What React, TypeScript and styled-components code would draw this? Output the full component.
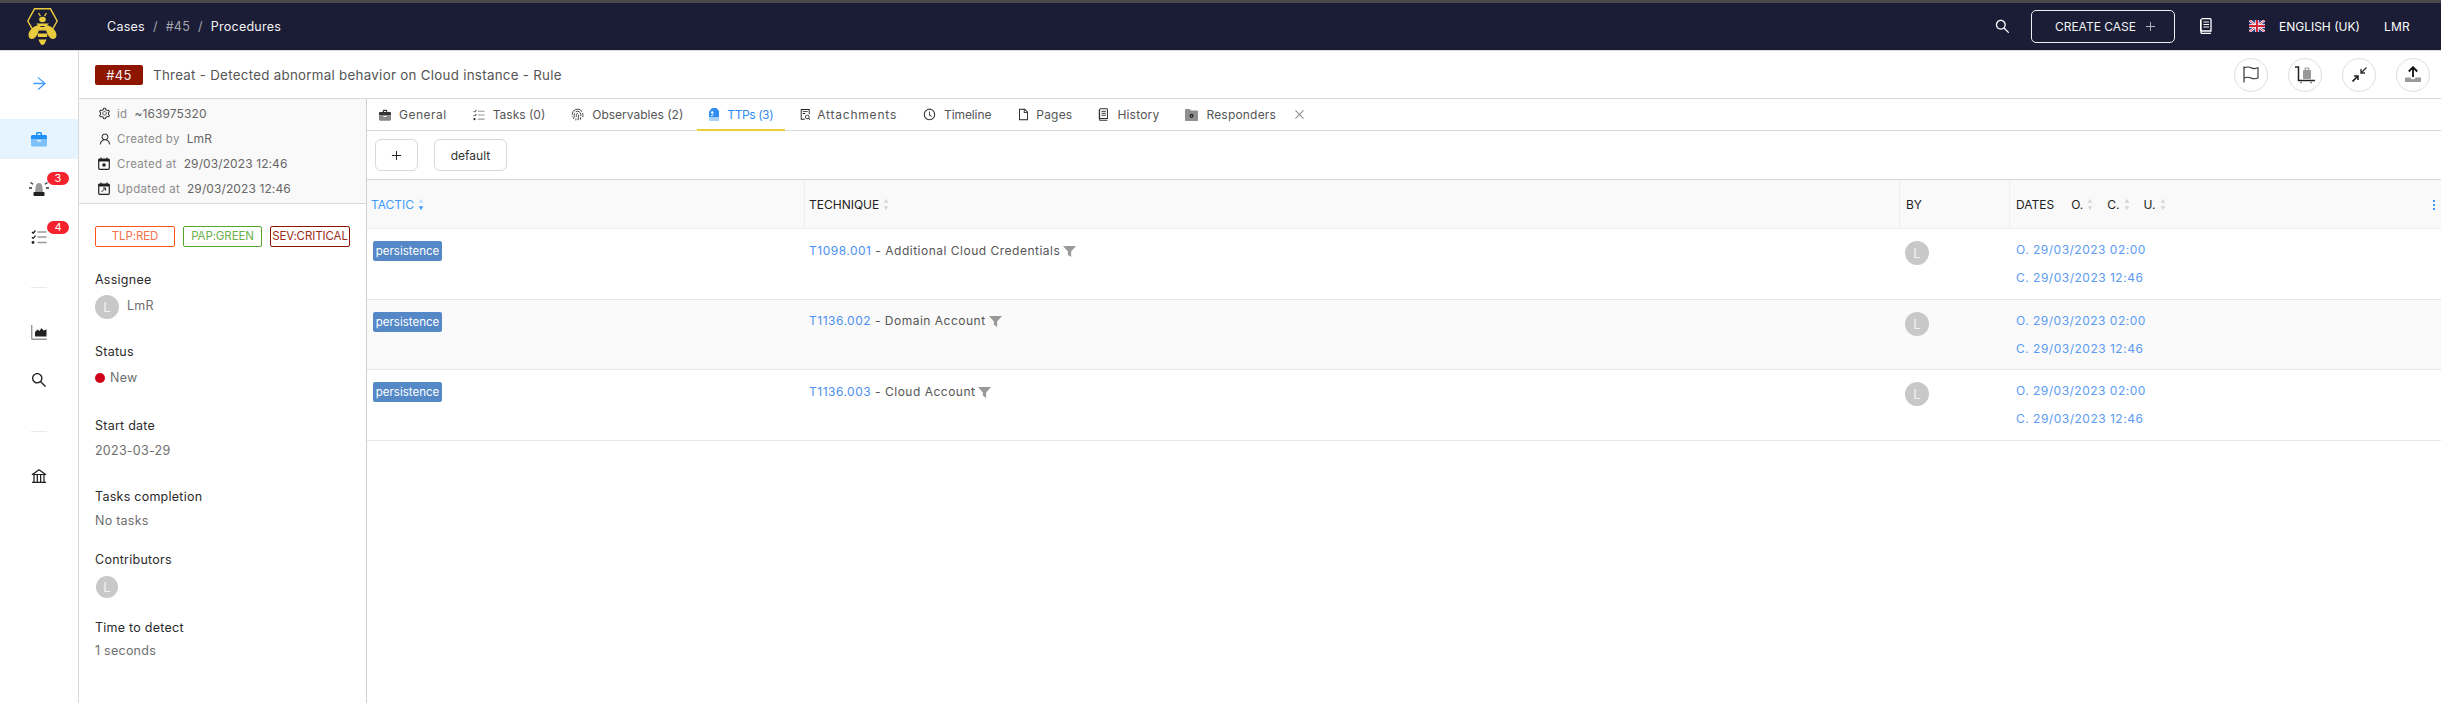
import React from 'react';
import styled, { createGlobalStyle } from 'styled-components';
import { AiOutlineArrowRight, AiOutlineSearch, AiOutlinePlus, AiOutlineClose, AiOutlineClockCircle, AiOutlineFile, AiOutlineSetting, AiOutlineBank, AiOutlineUser, AiOutlineFileSearch } from 'react-icons/ai';
import { Fingerprint } from 'lucide-react';

const Global = createGlobalStyle`
  html, body { margin: 0; padding: 0; height: 100%; overflow: hidden; background: #fff; }
  #root { height: 100%; }
  * { box-sizing: border-box; }
  body { font-family: Inter, "Open Sans", "Liberation Sans", sans-serif; font-size: 12px; letter-spacing: .25px; color: #333; }
`;

const Page = styled.div`height: 703px; display: flex; flex-direction: column;`;
const TopBar = styled.header`
  height: 51px; flex: none; background: #1b1d36; border-top: 3px solid #4b4b4b; border-bottom: 1px solid #ddd;
  display: flex; align-items: center; color: #fff; padding-left: 27px; padding-bottom: 1px;
`;
const LogoWrap = styled.div`width: 31px; height: 37px; margin-right: 49px;`;
const Crumbs = styled.nav`display: flex; gap: 8px; align-items: center; font-size: 12.5px; color: #f0f0f0;`;
const Crumb = styled.span<{ $muted?: boolean }>`color: ${p => (p.$muted ? '#a6a6ad' : '#f3f3f3')};`;
const TopRight = styled.div`margin-left: auto; display: flex; align-items: center; color: #fff;`;
const TopIcon = styled.span<{ $mr: number }>`display: flex; margin-right: ${p => p.$mr}px; font-size: 17px;`;
const CreateButton = styled.button`
  width: 144px; height: 33px; margin-right: 24px; background: transparent; border: 1px solid #f0f0f0; border-radius: 5px;
  color: #f2f2f2; font: inherit; font-size: 12px; letter-spacing: 0; display: flex; align-items: center; justify-content: center; gap: 8px; padding: 0 0 0 6px;
  svg { color: #b5b5bd; font-size: 13px; }
`;
const LangText = styled.span`margin-left: 14px; margin-right: 24px; font-size: 12px; letter-spacing: 0;`;
const UserName = styled.span`font-size: 12px; margin-right: 31px;`;

const Body = styled.div`flex: 1; display: flex; min-height: 0;`;
const Nav = styled.aside`width: 79px; flex: none; border-right: 1px solid #d9d9d9; display: flex; flex-direction: column;`;
const NavItem = styled.div<{ $active?: boolean; $h?: number; $mb?: number }>`
  position: relative; height: ${p => p.$h ?? 40}px; margin-bottom: ${p => p.$mb ?? 9}px; display: flex; align-items: center; justify-content: center;
  background: ${p => (p.$active ? '#e6f4ff' : 'transparent')}; font-size: 18px; color: #222;
`;
const Badge = styled.span`
  position: absolute; left: 47px; top: 4px; width: 22px; height: 13px; border-radius: 7px; background: #f5222d; color: #fff;
  font-size: 11px; line-height: 13px; text-align: center; letter-spacing: 0;
`;
const NavDivider = styled.div<{ $top: number }>`width: 16px; height: 1px; background: #e9e9e9; margin: ${p => p.$top}px auto 24px;`;

const Main = styled.main`flex: 1; min-width: 0; display: flex; flex-direction: column;`;
const CaseBar = styled.div`height: 48px; flex: none; border-bottom: 1px solid #d9d9d9; display: flex; align-items: center; padding-left: 16px; padding-right: 11px;`;
const CaseId = styled.span`width: 48px; height: 20px; background: #8e1600; border-radius: 2px; color: #f2f2f2; font-size: 13px; line-height: 20px; text-align: center; margin-right: 10px;`;
const CaseTitle = styled.span`font-size: 13.3px; color: #555; letter-spacing: .3px;`;
const Actions = styled.div`margin-left: auto; display: flex; gap: 20px;`;
const RoundBtn = styled.button`width: 34px; height: 34px; border-radius: 50%; border: 1px solid #dedede; background: #fff; padding: 0; display: flex; align-items: center; justify-content: center; color: #222; font-size: 17px;`;

const Content = styled.div`flex: 1; display: flex; min-height: 0;`;
const Side = styled.section`width: 288px; flex: none; border-right: 1px solid #d0d0d0; display: flex; flex-direction: column;`;
const Meta = styled.div`height: 105px; background: #f9f9f9; border-bottom: 1px solid #d9d9d9; padding: 2px 0 0 19px;`;
const MetaRow = styled.div`height: 25px; display: flex; align-items: center; color: #333; font-size: 12px; letter-spacing: .3px;`;
const MetaIcon = styled.span`width: 19px; display: flex; font-size: 14px; color: #333;`;
const MetaLabel = styled.span`color: #8c8c8c; margin-right: 7px; font-size: 11.5px;`;
const MetaValue = styled.span`color: #666; letter-spacing: .1px;`;
const Tags = styled.div`display: flex; gap: 8px; margin: 22px 0 0 16px;`;
const Tag = styled.span<{ $c: string; $t: string; $w: number }>`
  width: ${p => p.$w}px; height: 21px; border: 1px solid ${p => p.$c}; color: ${p => p.$t}; border-radius: 2px; font-size: 11.5px; line-height: 19px; text-align: center; letter-spacing: -.1px;
`;
const Block = styled.div<{ $top: number }>`margin: ${p => p.$top}px 0 0 16px;`;
const BlockLabel = styled.div<{ $gap: number }>`height: 20px; line-height: 20px; font-size: 12.5px; color: #2b2b2b; margin-bottom: ${p => p.$gap}px; padding-top: 1px;`;
const BlockValue = styled.div`height: 20px; line-height: 20px; color: #6e6e6e; font-size: 12.5px; display: flex; align-items: center; gap: 5px;`;
const Dot = styled.span`width: 10px; height: 10px; border-radius: 50%; background: #d0021b;`;
const Avatar = styled.span<{ $size?: number }>`
  width: ${p => p.$size ?? 24}px; height: ${p => p.$size ?? 24}px; border-radius: 50%; background: #c8c8c8; color: #f2f2f2; font-size: 13px;
  display: flex; align-items: center; justify-content: center; flex: none;
`;
const AssigneeRow = styled.div`display: flex; gap: 8px; align-items: flex-start; color: #6e6e6e; font-size: 12.5px; line-height: 22px;`;
const ContributorRow = styled.div`display: flex; padding-left: 1px;`;

const Work = styled.section`flex: 1; min-width: 0; display: flex; flex-direction: column;`;
const Tabs = styled.div`height: 32px; flex: none; border-bottom: 1px solid #d9d9d9; display: flex; align-items: stretch; gap: 2px;`;
const TabItem = styled.div<{ $active?: boolean; $ls?: number; $gap?: number }>`
  display: flex; align-items: center; gap: ${p => p.$gap ?? 8}px; padding: 0 12px; position: relative; font-size: 12px; letter-spacing: ${p => p.$ls ?? 0.2}px;
  color: ${p => (p.$active ? '#2f8cf0' : '#555')};
  svg { flex: none; }
  &::after { content: ''; position: absolute; left: 0; right: 0; bottom: -1px; height: 2px; background: ${p => (p.$active ? '#e8cf3a' : 'transparent')}; }
`;
const TabClose = styled.span`display: flex; align-items: center; margin-left: 3px; color: #8c8c8c; font-size: 13px;`;
const Toolbar = styled.div`height: 48px; flex: none; display: flex; align-items: center; padding-left: 8px; gap: 16px;`;
const GhostBtn = styled.button<{ $w: number }>`
  width: ${p => p.$w}px; height: 32px; border: 1px solid #d9d9d9; border-radius: 6px; background: #fff; color: #333; font: inherit; font-size: 12px;
  display: flex; align-items: center; justify-content: center; padding: 0;
`;
const TableGrid = `display: grid; grid-template-columns: 438px 1095px 110px 1fr;`;
const THead = styled.div`${TableGrid} height: 50px; flex: none; background: #f9f9f9; border-top: 1px solid #d9d9d9; border-bottom: 1px solid #efefef;`;
const TH = styled.div<{ $blue?: boolean; $pl?: number; $line?: boolean }>`
  display: flex; align-items: center; padding-left: ${p => p.$pl ?? 6}px; font-size: 12px; letter-spacing: 0; color: ${p => (p.$blue ? '#3f9bff' : '#222')};
  border-right: ${p => (p.$line ? '1px solid #efefef' : 'none')}; position: relative;
`;
const SortWrap = styled.span<{ $ml?: number; $mr?: number }>`display: inline-flex; margin-left: ${p => p.$ml ?? 4}px; margin-right: ${p => p.$mr ?? 0}px;`;
const DatesLabel = styled.span`margin-right: 17px;`;
const Kebab = styled.span`position: absolute; right: 6px; top: 19px; width: 2px; height: 12px; background: radial-gradient(circle, #3f9bff 1px, transparent 1.1px) 0 0 / 2px 4px;`;
const Row = styled.div<{ $alt?: boolean }>`${TableGrid} height: 70.5px; flex: none; border-bottom: 1px solid #e8e8e8; background: ${p => (p.$alt ? '#fafafa' : '#fff')};`;
const Cell = styled.div<{ $pl: number }>`padding: 12px 0 0 ${p => p.$pl}px;`;
const Tactic = styled.span`display: block; width: 69px; height: 20px; border-radius: 2px; background: #5488c7; color: #fff; font-size: 11.5px; line-height: 20px; text-align: center; letter-spacing: 0;`;
const TechLine = styled.div`height: 18px; display: flex; align-items: center; font-size: 12px; color: #555; letter-spacing: .5px;`;
const Link = styled.span`color: #4a90f0;`;
const FilterIcon = styled.svg`display: block; margin: 2px 0 0 3px; color: #999;`;
const DateLine = styled.div`height: 28px; line-height: 18px; color: #5b9af5; font-size: 12px; letter-spacing: .5px;`;

const Bee = () => (
  <svg width="31" height="37" viewBox="0 0 31 37">
    <path d="M5 20.500 0.800 13 7.500 .8H23.500L30.200 13 26 20.500" fill="none" stroke="#e9cc3e" strokeWidth="1.500" strokeLinejoin="round" />
    <path d="M11.500 5l2 3.200M19.500 5l-2 3.200" stroke="#e9cc3e" strokeWidth="1.300" />
    <ellipse cx="15.500" cy="11.500" rx="3.300" ry="2.700" fill="#e9cc3e" />
    <path d="M9 15.500H22L19 18H12Z" fill="#e9cc3e" />
    <path d="M14 17 C8 16 1.500 22 1.500 27 C1.500 32 7.500 33 10.500 26 Z M17 17 C23 16 29.500 22 29.500 27 C29.500 32 23.500 33 20.500 26 Z" fill="#e9cc3e" />
    <path d="M11.500 19H19.500L20.500 22.500H10.500Z M10.500 25.500H20.500L20 29H11Z M11.500 31.500H19.500Q17.500 37 15.500 37T11.500 31.500Z" fill="#e9cc3e" />
  </svg>
);

const Briefcase = ({ a = '#333', b = '#999', s = 16 }: { a?: string; b?: string; s?: number }) => (
  <svg width={s} height={s} viewBox="0 0 16 16">
    <path d="M5 4V2.500C5 1.700 5.600 1 6.500 1h3c.8 0 1.500.7 1.500 1.500V4h3.500c.8 0 1.500.7 1.500 1.500V8.500H0V5.500C0 4.700.7 4 1.500 4zm1.500 0h3V2.500h-3z" fill={a} />
    <path d="M0 9h6v1.500h4V9h6v5c0 .8-.7 1.500-1.500 1.500h-13C.7 15.500 0 14.800 0 14z" fill={b} />
  </svg>
);
const Siren = () => (
  <svg width="20" height="18" viewBox="0 0 20 18">
    <path d="M6 13 L7 6 Q7.500 4 10 4 Q12.500 4 13 6 L14 13Z" fill="#999" />
    <rect x="4.500" y="13" width="11" height="4" rx=".8" fill="#222" />
    <path d="M0 9h3M17 9h3M1.500 3.500l2.500 1.800M18.500 3.500l-2.500 1.800" stroke="#333" strokeWidth="1.300" />
  </svg>
);
const Tasks = ({ s = 16 }: { s?: number }) => (
  <svg width={s} height={s} viewBox="0 0 16 16">
    <path d="M1 3l1.200 1.200L4.500 1.500M1 8.200l1.200 1.200 2.300-2.700" fill="none" stroke="#222" strokeWidth="1.300" />
    <circle cx="2" cy="13.500" r="1.400" fill="#222" />
    <path d="M6.500 3h9M6.500 8h9M6.500 13.500h9" stroke="#999" strokeWidth="1.500" />
  </svg>
);
const AreaChart = () => (
  <svg width="16" height="15" viewBox="0 0 16 15">
    <path d="M.7 0V13.500c0 .5.300.8.800.8H16" fill="none" stroke="#999" strokeWidth="1.400" />
    <path d="M4 11.500V7l2.500-2.500L8.500 6l2-3 2 2.500 3-1v7z" fill="#222" />
  </svg>
);
const GearSmall = () => <AiOutlineSetting size={13} />;
const Calendar = ({ arrow }: { arrow?: boolean }) => (
  <svg width="12" height="13" viewBox="0 0 12 13">
    <path d="M3 .500v2.500M9 .500v2.500" stroke="#222" strokeWidth="1.200" />
    <rect x=".7" y="2" width="10.600" height="10.300" rx="1" fill="none" stroke="#222" strokeWidth="1.200" />
    <rect x=".7" y="2" width="10.600" height="2.500" fill="#222" />
    {arrow ? <path d="M3.500 10l4-4M5 6h2.600v2.600" fill="none" stroke="#222" strokeWidth="1" /> : <circle cx="6" cy="8" r="1.800" fill="#222" />}
  </svg>
);
const Book = ({ c = '#333', s = 14 }: { c?: string; s?: number }) => (
  <svg width={s} height={s + 2} viewBox="0 0 14 16">
    <path d="M3 .7h8.500c.6 0 1 .4 1 1V13H3a1.500 1.500 0 0 0 0 2.300h9.500" fill="none" stroke={c} strokeWidth="1.300" transform="translate(-.5 0)" />
    <path d="M1 2.500c0-1 .8-1.800 1.700-1.800V13c-.8 0-1.700.4-1.700 1.300z" fill={c} />
    <path d="M4.500 4h5.500M4.500 6.500h5.500M4.500 9h5.500" stroke={c} strokeWidth="1.200" />
  </svg>
);
const TtpIcon = () => (
  <svg width="10" height="13" viewBox="0 0 10 13">
    <path d="M3 0h4.500L10 3v10H0V3.500Z" fill="#2f8cf0" />
    <path d="M0 9h10v4H0Z" fill="#a9d2fb" />
    <circle cx="3.200" cy="4.500" r="1.300" fill="#fff" />
    <path d="M2 8l2.500-1.500" stroke="#fff" strokeWidth="1" />
  </svg>
);
const FolderGear = () => (
  <svg width="13" height="12" viewBox="0 0 13 12">
    <path d="M0 1.200C0 .6.500 0 1 0h3.500L6 1.500h6c.6 0 1 .5 1 1V11c0 .5-.4 1-1 1H1c-.6 0-1-.5-1-1z" fill="#8f8f8f" />
    <circle cx="6.500" cy="6.800" r="2" fill="#222" />
    <circle cx="6.500" cy="6.800" r=".7" fill="#999" />
  </svg>
);
const WavyFlag = () => (
  <svg width="16" height="17" viewBox="0 0 16 17">
    <path d="M1 .5V16.500" stroke="#333" strokeWidth="1.200" />
    <path d="M1 2C4 .5 6 .8 8 1.800s4.500 1 7 0V12c-2.500 1-5 1-7 0s-4-1.300-7 0" fill="none" stroke="#333" strokeWidth="1.100" />
  </svg>
);
const LuggageCart = () => (
  <svg width="20" height="18" viewBox="0 0 20 18">
    <rect x="8" y="4" width="8" height="9" rx="1" fill="#999" />
    <path d="M10.300 4V2h3.400v2" fill="none" stroke="#999" strokeWidth="1.200" />
    <path d="M0 1h3.500V14.500H20" fill="none" stroke="#222" strokeWidth="1.500" />
    <circle cx="6" cy="16.500" r="1" fill="#888" /><circle cx="16" cy="16.500" r="1" fill="#888" />
  </svg>
);
const Compress = () => (
  <svg width="15" height="15" viewBox="0 0 15 15">
    <path d="M14.500.500 9 6M9 2v4h4" fill="none" stroke="#333" strokeWidth="1.400" />
    <path d="M.5 14.500 6 9M2 9h4v4" fill="none" stroke="#222" strokeWidth="1.600" />
  </svg>
);
const Upload = () => (
  <svg width="16" height="17" viewBox="0 0 16 17">
    <path d="M8 11V1.500M3.800 5.500 8 1.200l4.200 4.300" fill="none" stroke="#111" strokeWidth="1.800" />
    <path d="M0 11.500h5.500c0 1 1 1.800 2.500 1.800s2.500-.8 2.500-1.800H16V16H0z" fill="#9a9a9a" />
  </svg>
);
const UkFlag = () => (
  <svg width="16" height="12" viewBox="0 0 16 12">
    <rect width="16" height="12" fill="#2b3f87" />
    <path d="M0 0 16 12M16 0 0 12" stroke="#fff" strokeWidth="2.400" />
    <path d="M0 0 16 12M16 0 0 12" stroke="#d6243a" strokeWidth=".9" />
    <path d="M8 0v12M0 6h16" stroke="#fff" strokeWidth="3.400" />
    <path d="M8 0v12M0 6h16" stroke="#d6243a" strokeWidth="2" />
  </svg>
);
const Sort = ({ active }: { active?: boolean }) => (
  <svg width="6" height="13" viewBox="0 0 6 13">
    <path d="M3 .8 5.300 4.800H.7Z" fill={active ? '#bcdcff' : '#d6d6d6'} />
    <path d="M3 12.200 5.300 8.200H.7Z" fill={active ? '#3f9bff' : '#d6d6d6'} />
  </svg>
);
const Funnel = () => (
  <FilterIcon width="13" height="11" viewBox="0 0 12 10">
    <path d="M0 0H12L7.500 5V10L4.500 8V5Z" fill="currentColor" />
  </FilterIcon>
);

const rows = [
  { id: 'T1098.001', name: 'Additional Cloud Credentials' },
  { id: 'T1136.002', name: 'Domain Account' },
  { id: 'T1136.003', name: 'Cloud Account' },
];

export default function App() {
  return (
    <Page>
      <Global />
      <TopBar>
        <LogoWrap><Bee /></LogoWrap>
        <Crumbs>
          <Crumb>Cases</Crumb><Crumb $muted>/</Crumb><Crumb $muted>#45</Crumb><Crumb $muted>/</Crumb><Crumb>Procedures</Crumb>
        </Crumbs>
        <TopRight>
          <TopIcon $mr={20}><AiOutlineSearch /></TopIcon>
          <CreateButton>CREATE CASE <AiOutlinePlus /></CreateButton>
          <TopIcon $mr={36}><Book c="#fff" /></TopIcon>
          <UkFlag />
          <LangText>ENGLISH (UK)</LangText>
          <UserName>LMR</UserName>
        </TopRight>
      </TopBar>
      <Body>
        <Nav>
          <NavItem $h={64} $mb={4}><AiOutlineArrowRight color="#3f9bff" size={17} /></NavItem>
          <NavItem $active><Briefcase a="#1f90f5" b="#7cc0fb" /></NavItem>
          <NavItem><Siren /><Badge>3</Badge></NavItem>
          <NavItem $mb={0}><Tasks /><Badge>4</Badge></NavItem>
          <NavDivider $top={30} />
          <NavItem $mb={8}><AreaChart /></NavItem>
          <NavItem $mb={0}><AiOutlineSearch size={18} /></NavItem>
          <NavDivider $top={31} />
          <NavItem><AiOutlineBank size={18} /></NavItem>
        </Nav>
        <Main>
          <CaseBar>
            <CaseId>#45</CaseId>
            <CaseTitle>Threat - Detected abnormal behavior on Cloud instance - Rule</CaseTitle>
            <Actions>
              <RoundBtn><WavyFlag /></RoundBtn>
              <RoundBtn><LuggageCart /></RoundBtn>
              <RoundBtn><Compress /></RoundBtn>
              <RoundBtn><Upload /></RoundBtn>
            </Actions>
          </CaseBar>
          <Content>
            <Side>
              <Meta>
                <MetaRow><MetaIcon><GearSmall /></MetaIcon><MetaLabel>id</MetaLabel><MetaValue>~163975320</MetaValue></MetaRow>
                <MetaRow><MetaIcon><AiOutlineUser /></MetaIcon><MetaLabel>Created by</MetaLabel><MetaValue>LmR</MetaValue></MetaRow>
                <MetaRow><MetaIcon><Calendar /></MetaIcon><MetaLabel>Created at</MetaLabel><MetaValue>29/03/2023 12:46</MetaValue></MetaRow>
                <MetaRow><MetaIcon><Calendar arrow /></MetaIcon><MetaLabel>Updated at</MetaLabel><MetaValue>29/03/2023 12:46</MetaValue></MetaRow>
              </Meta>
              <Tags>
                <Tag $w={80} $c="#fa541c" $t="#f4724a">TLP:RED</Tag>
                <Tag $w={79} $c="#52a72a" $t="#6bb04a">PAP:GREEN</Tag>
                <Tag $w={80} $c="#8e1600" $t="#9a2b18">SEV:CRITICAL</Tag>
              </Tags>
              <Block $top={22}>
                <BlockLabel $gap={6}>Assignee</BlockLabel>
                <AssigneeRow><Avatar>L</Avatar>LmR</AssigneeRow>
              </Block>
              <Block $top={22}>
                <BlockLabel $gap={7}>Status</BlockLabel>
                <BlockValue><Dot />New</BlockValue>
              </Block>
              <Block $top={27}>
                <BlockLabel $gap={6}>Start date</BlockLabel>
                <BlockValue>2023-03-29</BlockValue>
              </Block>
              <Block $top={25}>
                <BlockLabel $gap={5}>Tasks completion</BlockLabel>
                <BlockValue>No tasks</BlockValue>
              </Block>
              <Block $top={18}>
                <BlockLabel $gap={7}>Contributors</BlockLabel>
                <ContributorRow><Avatar $size={22}>L</Avatar></ContributorRow>
              </Block>
              <Block $top={19}>
                <BlockLabel $gap={4}>Time to detect</BlockLabel>
                <BlockValue>1 seconds</BlockValue>
              </Block>
            </Side>
            <Work>
              <Tabs>
                <TabItem $ls={0.5}><Briefcase s={12} a="#333" b="#888" />General</TabItem>
                <TabItem $ls={0}><Tasks s={12} />Tasks (0)</TabItem>
                <TabItem $ls={0}><Fingerprint size={13} strokeWidth={1.8} color="#444" />Observables (2)</TabItem>
                <TabItem $active $ls={-0.4}><TtpIcon />TTPs (3)</TabItem>
                <TabItem $ls={0.8} $gap={5}><AiOutlineFileSearch size={13} color="#222" />Attachments</TabItem>
                <TabItem $ls={-0.1}><AiOutlineClockCircle size={13} color="#222" />Timeline</TabItem>
                <TabItem $gap={6}><AiOutlineFile size={13} color="#222" />Pages</TabItem>
                <TabItem><Book s={11} />History</TabItem>
                <TabItem><FolderGear />Responders</TabItem>
                <TabClose><AiOutlineClose /></TabClose>
              </Tabs>
              <Toolbar>
                <GhostBtn $w={43}><AiOutlinePlus size={13} color="#222" /></GhostBtn>
                <GhostBtn $w={73}>default</GhostBtn>
              </Toolbar>
              <THead>
                <TH $blue $line $pl={4}>TACTIC<SortWrap><Sort active /></SortWrap></TH>
                <TH $line $pl={4}>TECHNIQUE<SortWrap><Sort /></SortWrap></TH>
                <TH $line>BY</TH>
                <TH>
                  <DatesLabel>DATES</DatesLabel>
                  O.<SortWrap $mr={14}><Sort /></SortWrap>
                  C.<SortWrap $mr={14}><Sort /></SortWrap>
                  U.<SortWrap><Sort /></SortWrap>
                  <Kebab />
                </TH>
              </THead>
              {rows.map((r, i) => (
                <Row key={r.id} $alt={i === 1}>
                  <Cell $pl={6}><Tactic>persistence</Tactic></Cell>
                  <Cell $pl={4}>
                    <TechLine><Link>{r.id}</Link>&nbsp;- {r.name}<Funnel /></TechLine>
                  </Cell>
                  <Cell $pl={5}><Avatar>L</Avatar></Cell>
                  <Cell $pl={6}>
                    <DateLine>O. 29/03/2023 02:00</DateLine>
                    <DateLine>C. 29/03/2023 12:46</DateLine>
                  </Cell>
                </Row>
              ))}
            </Work>
          </Content>
        </Main>
      </Body>
    </Page>
  );
}
